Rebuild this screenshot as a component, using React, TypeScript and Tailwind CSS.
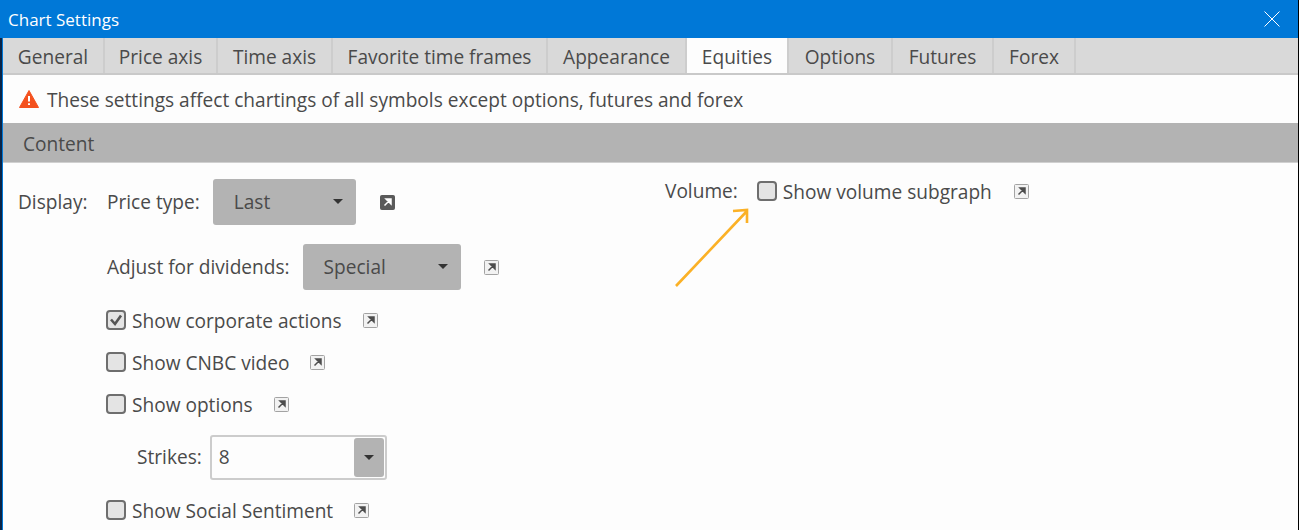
import { type FC } from "react";

const tabs = [
  { name: "General", width: "w-[102px]" },
  { name: "Price axis", width: "w-[113px]" },
  { name: "Time axis", width: "w-[115px]" },
  { name: "Favorite time frames", width: "w-[215px]" },
  { name: "Appearance", width: "w-[139px]" },
  { name: "Equities", width: "w-[102px]" },
  { name: "Options", width: "w-[104px]" },
  { name: "Futures", width: "w-[101px]" },
  { name: "Forex", width: "w-[82px]" },
];

const LinkIcon: FC<{ dark?: boolean }> = ({ dark }) => (
  <svg width="15" height="15" viewBox="0 0 15 15" className="shrink-0">
    <rect
      x="0.5"
      y="0.5"
      width="14"
      height="14"
      rx="1"
      fill={dark ? "#5a5a5a" : "#f2f2f2"}
      stroke={dark ? "#5a5a5a" : "#a3a3a3"}
    />
    <path
      d="M4.5 10.5 L8.5 6.5 M6 4 H11 V9 Z"
      fill={dark ? "#ffffff" : "#4d4d4d"}
      stroke={dark ? "#ffffff" : "#4d4d4d"}
      strokeWidth="1.5"
    />
  </svg>
);

const Check: FC<{ label: string; checked?: boolean; gap?: string }> = ({
  label,
  checked,
  gap = "mr-[21px]",
}) => (
  <div className="flex h-[20px] items-center">
    <div className="flex h-[20px] w-[20px] items-center justify-center rounded-[4px] border-2 border-[#6e6e6e] bg-[#e4e4e4]">
      {checked && (
        <svg width="14" height="14" viewBox="0 0 14 14">
          <path
            d="M2 6.5 L6 11 L12 2.5"
            fill="none"
            stroke="#555555"
            strokeWidth="2.6"
          />
        </svg>
      )}
    </div>
    <span className={`ml-[6px] pt-[2px] ${gap}`}>{label}</span>
    <LinkIcon />
  </div>
);

const Select: FC<{ value: string; width: string }> = ({ value, width }) => (
  <div
    className={`flex h-[46px] items-center justify-between rounded-[3px] bg-[#b3b3b3] pl-[21px] pr-[13px] ${width}`}
  >
    <span>{value}</span>
    <span className="mb-[2px] h-0 w-0 border-x-[5px] border-t-[5px] border-x-transparent border-t-[#333333]" />
  </div>
);

export default function App() {
  return (
    <div className="relative h-[530px] w-[1299px] overflow-hidden border-r border-black bg-[#fdfdfd] font-['Open_Sans',sans-serif] text-[19.1px] leading-[24px] text-[#4a4a4a]">
      <div className="flex h-[38px] items-center justify-between bg-[#0078d7] pl-[8px] pr-[18px] text-[#ffffff]">
        <span className="pt-[2px] text-[17px]">Chart Settings</span>
        <svg width="16" height="16" viewBox="0 0 16 16">
          <path d="M0.5 0.5 L15.5 15.5 M15.5 0.5 L0.5 15.5" stroke="#ffffff" strokeWidth="1" />
        </svg>
      </div>

      <div className="h-[492px] border-l-[2px] border-[#0a2548]">
        <div className="h-full border-l border-[#0078d7]">
          <div className="flex h-[37px] border-b-2 border-[#c9c9c9] bg-[#d9d9d9] pr-[1px]">
            {tabs.map((tab) => (
              <div
                key={tab.name}
                className={`flex items-center justify-center border-r-2 border-[#cdcdcd] pt-[2px] ${tab.width} ${
                  tab.name === "Equities" ? "bg-[#fdfdfd]" : ""
                }`}
              >
                {tab.name}
              </div>
            ))}
          </div>

          <div className="flex h-[48px] items-center pl-[16px]">
            <svg width="20" height="18" viewBox="0 0 20 18" className="mr-[8px]">
              <path d="M10 0.5 L19.5 17.5 H0.5 Z" fill="#f4511e" stroke="#f4511e" strokeLinejoin="round" />
              <path d="M10 6 V11.5 M10 13.2 V15" stroke="#ffffff" strokeWidth="2" />
            </svg>
            <span className="pt-[2px]">
              These settings affect chartings of all symbols except options, futures and forex
            </span>
          </div>

          <div className="flex h-[40px] items-center border-b border-[#d0d0d0] bg-[#b3b3b3] pl-[20px] pt-[2px]">
            Content
          </div>

          <div className="flex">
            <div className="flex w-[662px] pl-[15px]">
              <span className="mt-[27px] w-[89px]">Display:</span>
              <div className="flex flex-col pt-[16px]">
                <div className="flex items-center">
                  <span className="mr-[13px]">Price type:</span>
                  <Select value="Last" width="w-[143px]" />
                  <span className="ml-[24px]">
                    <LinkIcon dark />
                  </span>
                </div>
                <div className="mt-[19px] flex items-center">
                  <span className="mr-[13px]">Adjust for dividends:</span>
                  <Select value="Special" width="w-[158px]" />
                  <span className="ml-[23px]">
                    <LinkIcon />
                  </span>
                </div>
                <div className="mt-[20px] -ml-[1px] flex flex-col gap-[22px]">
                  <Check label="Show corporate actions" checked />
                  <Check label="Show CNBC video" />
                  <Check label="Show options" />
                </div>
                <div className="mt-[21px] flex items-center pl-[30px]">
                  <span className="mr-[8px] pb-[2px]">Strikes:</span>
                  <div className="flex h-[45px] w-[177px] items-center justify-between rounded-[3px] border-2 border-[#cccccc] pl-[7px] pr-[1px]">
                    <span className="pb-[2px]">8</span>
                    <div className="flex h-[39px] w-[30px] items-center justify-center rounded-[3px] bg-[#b3b3b3]">
                      <span className="h-0 w-0 border-x-[5px] border-t-[5px] border-x-transparent border-t-[#333333]" />
                    </div>
                  </div>
                </div>
                <div className="mt-[20px] -ml-[1px]">
                  <Check label="Show Social Sentiment" />
                </div>
              </div>
            </div>

            <div className="flex h-fit items-center pt-[16px]">
              <span className="mr-[19px]">Volume:</span>
              <Check label="Show volume subgraph" gap="mr-[22px]" />
            </div>
          </div>
        </div>
      </div>

      <svg
        width="90"
        height="90"
        viewBox="0 0 90 90"
        className="absolute left-[668px] top-[203px]"
      >
        <path
          d="M8 83 L79 8 M65 8 L79 7 L79 20"
          fill="none"
          stroke="#fbb126"
          strokeWidth="2.6"
        />
      </svg>
    </div>
  );
}
